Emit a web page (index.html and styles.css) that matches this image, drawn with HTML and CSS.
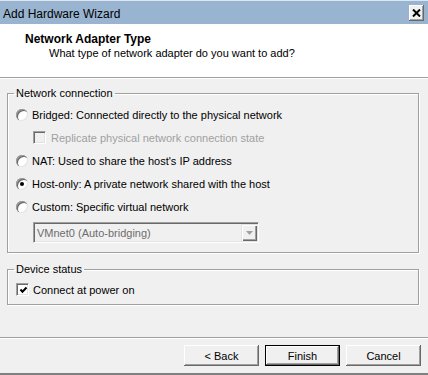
FILE: index.html
```html
<!DOCTYPE html>
<html lang="en">
  <head>
    <meta charset="UTF-8" />
    <title>Add Hardware Wizard</title>
    <link rel="stylesheet" href="styles.css">
  </head>
  <body>
    <div class="wizard">
      <div class="titlebar">
        <span class="title">Add Hardware Wizard</span>
        <button class="close">
          <svg width="9" height="8" viewBox="0 0 9 8">
            <path d="M1 0.5 L8 7.5 M8 0.5 L1 7.5" stroke="#000" stroke-width="2" fill="none" />
          </svg>
        </button>
      </div>

      <div class="header">
        <h1>Network Adapter Type</h1>
        <p>What type of network adapter do you want to add?</p>
      </div>

      <fieldset class="group net">
        <legend>Network connection</legend>
        <div class="option">
          <span class="radio"></span>
          <span>Bridged: Connected directly to the physical network</span>
        </div>
        <div class="option sub disabled">
          <span class="check"></span>
          <span>Replicate physical network connection state</span>
        </div>
        <div class="option">
          <span class="radio"></span>
          <span>NAT: Used to share the host's IP address</span>
        </div>
        <div class="option">
          <span class="radio checked"></span>
          <span>Host-only: A private network shared with the host</span>
        </div>
        <div class="option">
          <span class="radio"></span>
          <span>Custom: Specific virtual network</span>
        </div>
        <div class="combo">
          <span class="combo-text">VMnet0 (Auto-bridging)</span>
          <span class="drop">
            <svg width="7" height="4" viewBox="0 0 7 4">
              <polygon points="0,0 7,0 3.5,4" fill="#a0a0a0" />
            </svg>
          </span>
        </div>
      </fieldset>

      <fieldset class="group status">
        <legend>Device status</legend>
        <div class="option">
          <span class="check">
            <svg width="9" height="9" viewBox="0 0 9 9">
              <polyline points="1.5,3.5 3.5,5.8 7.5,1.5" stroke="#000" stroke-width="2" fill="none" />
            </svg>
          </span>
          <span>Connect at power on</span>
        </div>
      </fieldset>

      <div class="footer">
        <div class="buttons">
          <button class="btn">&lt; Back</button>
          <button class="btn default">Finish</button>
          <button class="btn">Cancel</button>
        </div>
      </div>
    </div>
  </body>
</html>
```

FILE: styles.css
```css
* {
  margin: 0;
  padding: 0;
  box-sizing: border-box;
}
body {
  font-family: "Liberation Sans", Arial, sans-serif;
  font-size: 11px;
  color: #000;
  background-color: #f0f0f0;
}
.wizard {
  width: 428px;
  height: 375px;
  display: flex;
  flex-direction: column;
  background-color: #f0f0f0;
}

/* title bar */
.titlebar {
  height: 24px;
  border-top: 1px solid #dde6f0;
  background-color: #99b4d1;
  display: flex;
  align-items: center;
  justify-content: space-between;
  padding: 2px 4px 0 3px;
}
.title {
  font-size: 12px;
}
.close {
  width: 15px;
  height: 16px;
  margin-top: -1px;
  background-color: #f0f0f0;
  border: 0;
  box-shadow: inset -1px -1px 0 #696969, inset 1px 1px 0 #fff,
    inset -2px -2px 0 #a0a0a0;
  display: flex;
  align-items: center;
  justify-content: center;
}

/* header */
.header {
  height: 54px;
  background-color: #fff;
  border-bottom: 1px solid #a0a0a0;
  box-shadow: 0 1px 0 #fff;
  padding-top: 8px;
}
.header h1 {
  font-size: 12px;
  font-weight: 700;
  line-height: 14px;
  padding-left: 25px;
}
.header p {
  line-height: 14px;
  padding-left: 49px;
}

/* group boxes */
.group {
  margin: 8px 9px 0 7px;
  border: 1px solid #a0a0a0;
  box-shadow: inset 1px 1px 0 #fff, 1px 1px 0 #fff;
  padding: 3px 0 9px 6px;
}
.group legend {
  line-height: 14px;
  padding: 0 2px;
}
.group.status {
  margin-top: 9px;
  padding: 2px 0 3px 6px;
}
.option {
  height: 23px;
  display: flex;
  align-items: center;
  gap: 4px;
  padding-left: 2px;
}
.option.sub {
  padding-left: 19px;
  gap: 5px;
}
.option.disabled {
  color: #a0a0a0;
}
.radio {
  width: 12px;
  height: 12px;
  border-radius: 50%;
  background-color: #fff;
  box-shadow: inset 1px 1px 0 #a0a0a0, inset 2px 2px 0 #696969,
    inset -1px -1px 0 #e3e3e3;
  display: flex;
  align-items: center;
  justify-content: center;
}
.radio.checked::after {
  content: "";
  width: 4px;
  height: 4px;
  border-radius: 50%;
  background-color: #000;
}
.check {
  width: 13px;
  height: 13px;
  background-color: #fff;
  border: 1px solid;
  border-color: #a0a0a0 #fff #fff #a0a0a0;
  box-shadow: inset 1px 1px 0 #696969, inset -1px -1px 0 #e3e3e3;
  display: flex;
  align-items: center;
  justify-content: center;
  padding: 1px 0 0 1px;
}
.option.status-check .check {
  margin-left: 0;
}
.disabled .check {
  background-color: #f0f0f0;
}

/* combo box */
.combo {
  width: 226px;
  height: 21px;
  margin: 4px 0 0 19px;
  border: 1px solid;
  border-color: #a0a0a0 #fff #fff #a0a0a0;
  box-shadow: inset 1px 1px 0 #696969, inset -1px -1px 0 #e3e3e3;
  display: flex;
  align-items: center;
  justify-content: space-between;
  padding: 0 1px 0 3px;
  color: #6d6d6d;
}
.drop {
  width: 16px;
  height: 17px;
  background-color: #f0f0f0;
  box-shadow: inset 1px 1px 0 #e3e3e3, inset 2px 2px 0 #fff,
    inset -1px -1px 0 #696969, inset -2px -2px 0 #a0a0a0;
  display: flex;
  align-items: center;
  justify-content: center;
}

/* footer */
.footer {
  margin-top: auto;
  border-top: 1px solid #a0a0a0;
  box-shadow: inset 0 1px 0 #fff;
  border-bottom: 2px solid #808080;
  padding: 7px 7px 7px 0;
}
.buttons {
  display: flex;
  justify-content: flex-end;
  gap: 6px;
}
.btn {
  width: 75px;
  height: 21px;
  font-family: "Liberation Sans", Arial, sans-serif;
  font-size: 11px;
  color: #000;
  background-color: #f0f0f0;
  border: 0;
  box-shadow: inset -1px -1px 0 #696969, inset 1px 1px 0 #fff,
    inset -2px -2px 0 #a0a0a0;
}
.btn.default {
  border: 1px solid #000;
}
```
